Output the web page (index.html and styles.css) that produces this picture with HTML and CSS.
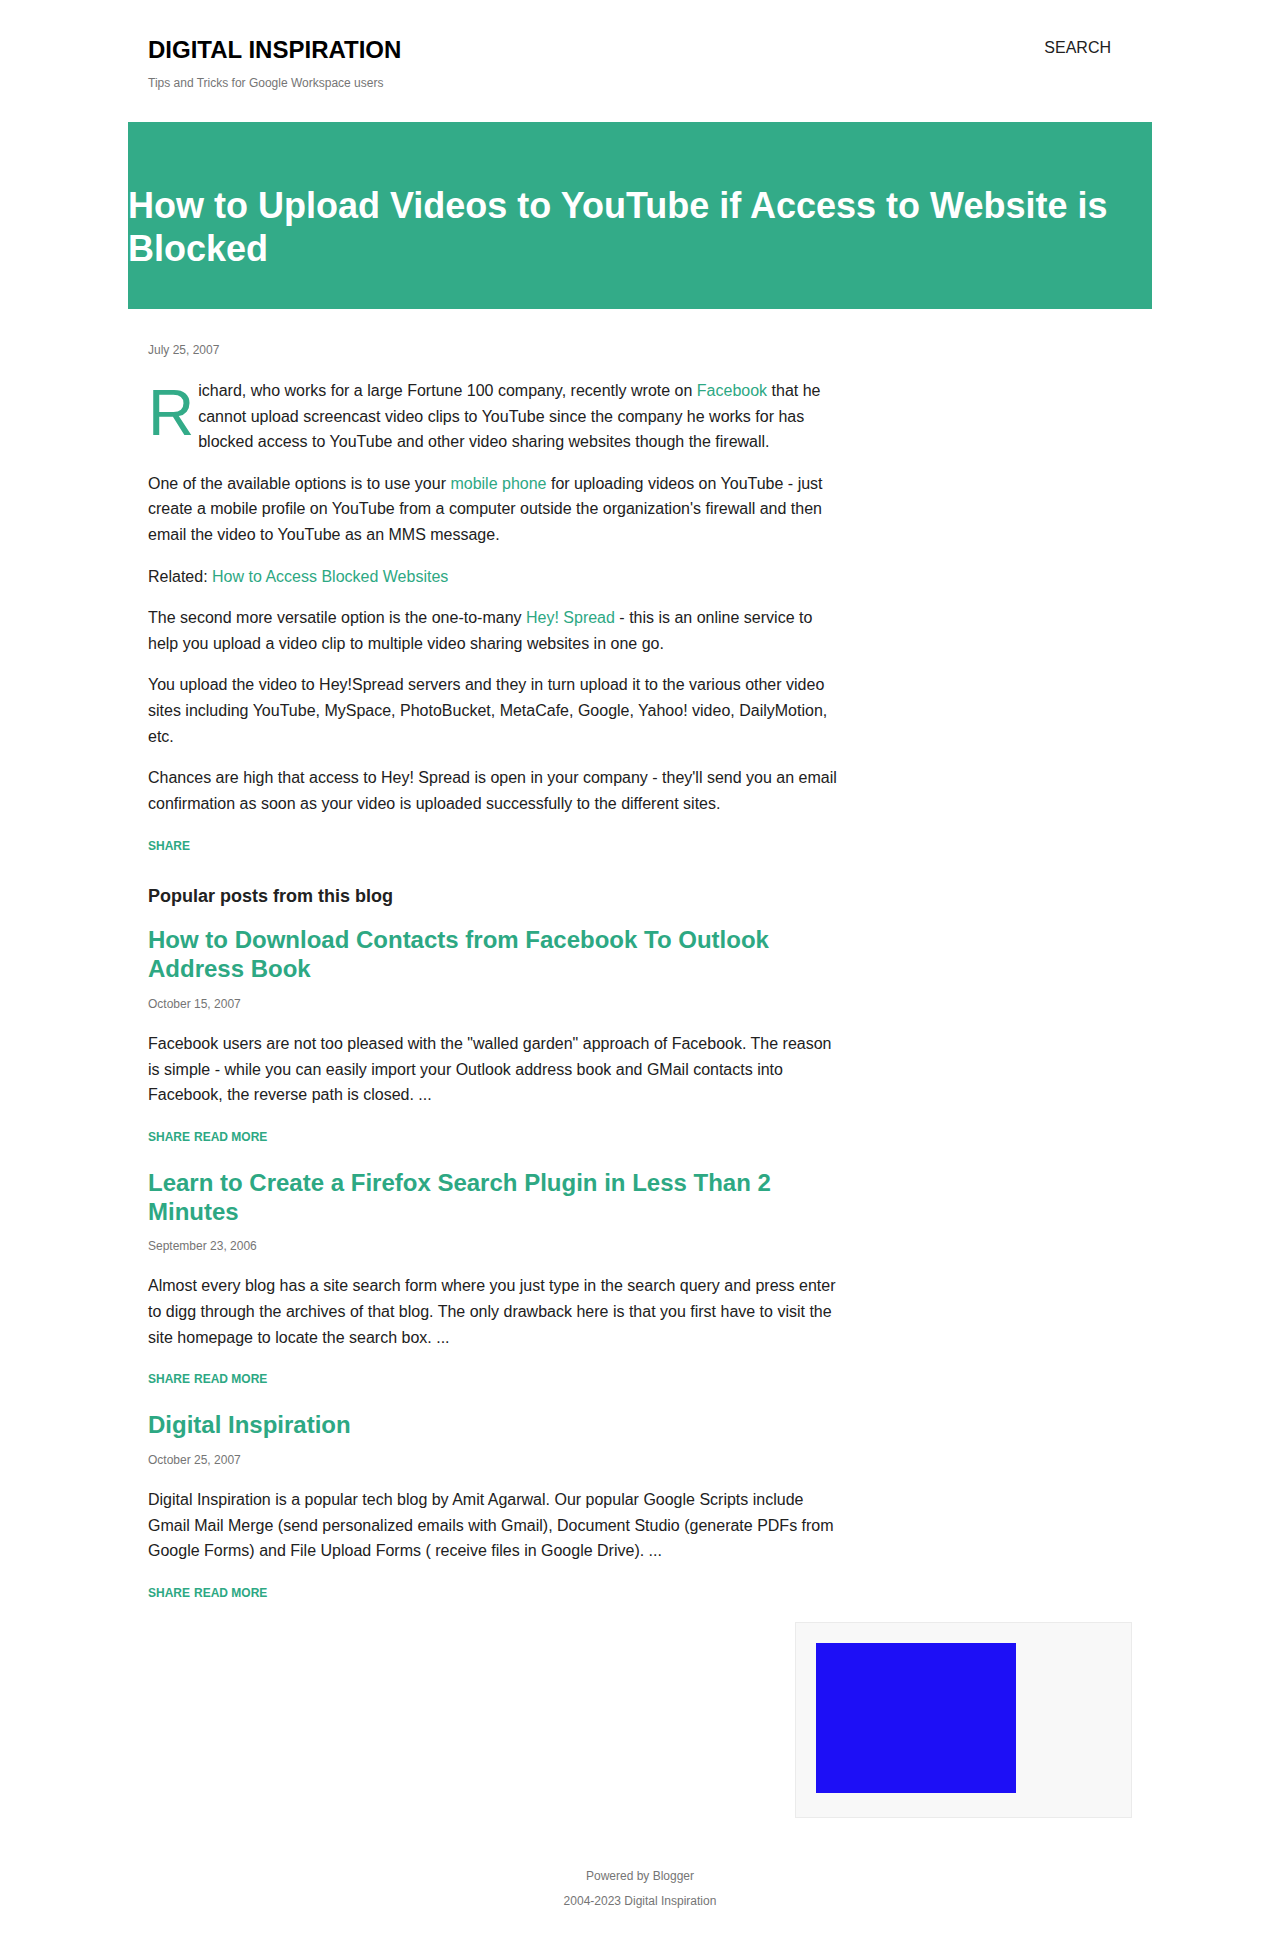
FILE: index.html
```html
<!DOCTYPE html>
<html lang="en">
<head>
<meta charset="utf-8">
<title>How to Upload Videos to YouTube if Access to Website is Blocked</title>
<link rel="stylesheet" href="styles.css">
</head>
<body>
<div class="page">
  <header class="site-header">
    <div class="brand">
      <h1 class="site-title">DIGITAL INSPIRATION</h1>
      <p class="tagline">Tips and Tricks for Google Workspace users</p>
    </div>
    <div class="search">SEARCH</div>
  </header>

  <section class="hero">
    <h2 class="hero-title">How to Upload Videos to YouTube if Access to Website is Blocked</h2>
  </section>

  <main class="main">
    <article class="post">
      <div class="date">July 25, 2007</div>
      <div class="post-body">
        <p><span class="dropcap">R</span>ichard, who works for a large Fortune 100 company, recently wrote on <a href="#">Facebook</a> that he cannot upload screencast video clips to YouTube since the company he works for has blocked access to YouTube and other video sharing websites though the firewall.</p>
        <p>One of the available options is to use your <a href="#">mobile phone</a> for uploading videos on YouTube - just create a mobile profile on YouTube from a computer outside the organization's firewall and then email the video to YouTube as an MMS message.</p>
        <p>Related: <a href="#">How to Access Blocked Websites</a></p>
        <p>The second more versatile option is the one-to-many <a href="#">Hey! Spread</a> - this is an online service to help you upload a video clip to multiple video sharing websites in one go.</p>
        <p>You upload the video to Hey!Spread servers and they in turn upload it to the various other video sites including YouTube, MySpace, PhotoBucket, MetaCafe, Google, Yahoo! video, DailyMotion, etc.</p>
        <p>Chances are high that access to Hey! Spread is open in your company - they'll send you an email confirmation as soon as your video is uploaded successfully to the different sites.</p>
      </div>
      <div class="actions"><a href="#">SHARE</a></div>
    </article>

    <section class="popular">
      <h3 class="popular-heading">Popular posts from this blog</h3>

      <div class="related">
        <h4 class="related-title"><a href="#">How to Download Contacts from Facebook To Outlook Address Book</a></h4>
        <div class="date">October 15, 2007</div>
        <p class="snippet">Facebook users are not too pleased with the "walled garden" approach of Facebook. The reason is simple - while you can easily import your Outlook address book and GMail contacts into Facebook, the reverse path is closed. ...</p>
        <div class="actions"><a href="#">SHARE</a><a href="#">READ MORE</a></div>
      </div>

      <div class="related">
        <h4 class="related-title"><a href="#">Learn to Create a Firefox Search Plugin in Less Than 2 Minutes</a></h4>
        <div class="date">September 23, 2006</div>
        <p class="snippet">Almost every blog has a site search form where you just type in the search query and press enter to digg through the archives of that blog. The only drawback here is that you first have to visit the site homepage to locate the search box. ...</p>
        <div class="actions"><a href="#">SHARE</a><a href="#">READ MORE</a></div>
      </div>

      <div class="related">
        <h4 class="related-title"><a href="#">Digital Inspiration</a></h4>
        <div class="date">October 25, 2007</div>
        <p class="snippet">Digital Inspiration is a popular tech blog by Amit Agarwal. Our popular Google Scripts include Gmail Mail Merge (send personalized emails with Gmail), Document Studio (generate PDFs from Google Forms) and File Upload Forms ( receive files in Google Drive). ...</p>
        <div class="actions"><a href="#">SHARE</a><a href="#">READ MORE</a></div>
      </div>
    </section>
  </main>

  <aside class="sidebar">
    <div class="widget">
      <div class="ad"></div>
    </div>
  </aside>

  <footer class="site-footer">
    <div>Powered by Blogger</div>
    <div>2004-2023 Digital Inspiration</div>
  </footer>
</div>
</body>
</html>
```

FILE: styles.css
```css
* {
  box-sizing: border-box;
}

body {
  margin: 0;
  background: #ffffff;
  font-family: "Liberation Sans", Arial, Helvetica, sans-serif;
  color: #212121;
}

a {
  color: #2da883;
  text-decoration: none;
}

.page {
  width: 1024px;
  margin: 0 auto;
}

/* Header */
.site-header {
  display: flex;
  justify-content: space-between;
  align-items: flex-start;
  padding: 36px 41px 30px 20px;
}

.site-title {
  margin: 0;
  font-size: 24px;
  line-height: 28px;
  font-weight: 700;
  color: #000000;
}

.tagline {
  margin: 10px 0 0;
  font-size: 12px;
  line-height: 18px;
  color: #757575;
}

.search {
  font-size: 16px;
  line-height: 24px;
  color: #212121;
}

/* Hero band */
.hero {
  background: #33ab88;
  padding: 62px 0 38.6px;
}

.hero-title {
  margin: 0;
  color: #ffffff;
  font-size: 36px;
  line-height: 1.2;
  font-weight: 700;
}

/* Main column */
.main {
  width: 734px;
  padding: 31px 20px 0;
}

.date {
  font-size: 12px;
  line-height: 20px;
  color: #757575;
}

.post-body {
  margin-top: 18px;
  font-size: 16px;
  line-height: 1.6;
}

.post-body p {
  margin: 0 0 16px;
}

.post-body p:last-child {
  margin-bottom: 0;
}

.dropcap {
  float: left;
  font-size: 64px;
  line-height: 1.1;
  color: #33ab88;
  margin-right: 4px;
}

.actions {
  display: flex;
  gap: 4px;
  margin-top: 20.6px;
  font-size: 12px;
  line-height: 18px;
  font-weight: 700;
}

/* Popular posts */
.popular-heading {
  margin: 31px 0 0;
  font-size: 18px;
  line-height: 1.2;
  font-weight: 700;
  color: #212121;
}

.related {
  margin-top: 23px;
}

.popular-heading + .related {
  margin-top: 19px;
}

.related-title {
  margin: 0;
  font-size: 24px;
  line-height: 1.2;
  font-weight: 700;
}

.related .date {
  margin-top: 10px;
}

.snippet {
  margin: 17px 0 0;
  font-size: 16px;
  line-height: 1.6;
}

.related .actions {
  margin-top: 20px;
}

/* Sidebar */
.sidebar {
  width: 337px;
  margin: 20px 20px 0 auto;
}

.widget {
  background: #f8f8f8;
  border: 1px solid #ebebeb;
  padding: 20px 20px 24px;
}

.ad {
  width: 200px;
  height: 150px;
  background: #1d0ff6;
}

/* Footer */
.site-footer {
  margin-top: 46px;
  padding-bottom: 25px;
  text-align: center;
  font-size: 12px;
  line-height: 25.4px;
  color: #757575;
}
```
